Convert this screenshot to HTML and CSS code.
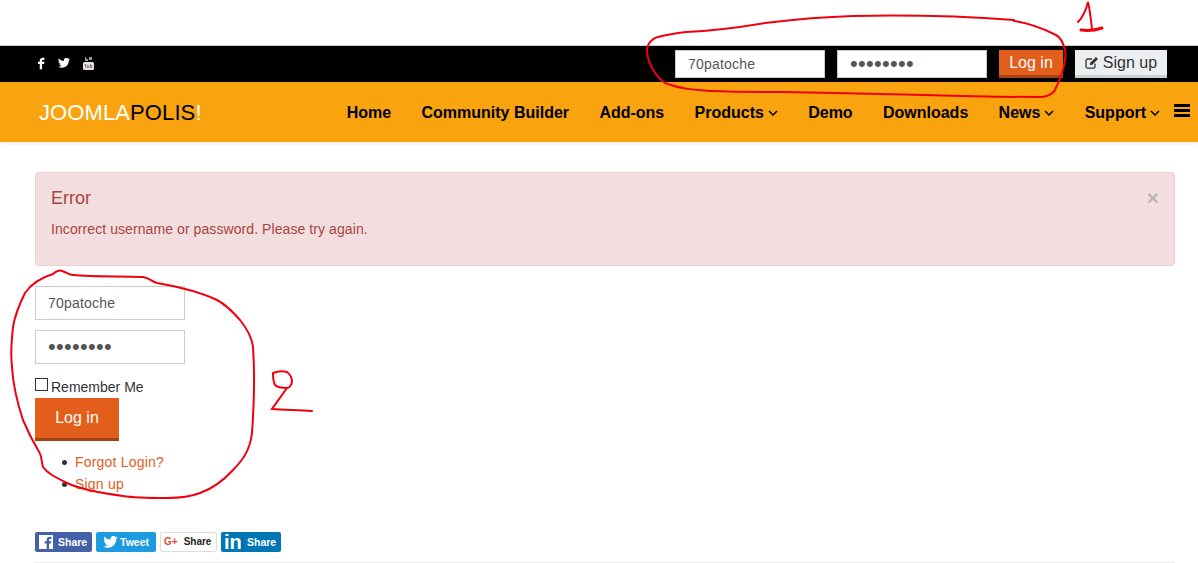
FILE: index.html
```html
<!DOCTYPE html>
<html lang="en">
<head>
    <meta charset="UTF-8">
    <title>Joomlapolis - Login</title>
    <link rel="stylesheet" href="styles.css">
</head>
<body>
    <div class="topbar">
        <div class="social">
            <a href="#" class="social-fb"><svg width="7" height="13" viewBox="6 3 12 22"><path fill="#fff" d="M14 8h3V4h-3c-2.8 0-5 2.2-5 5v2H6v4h3v9h4v-9h3.5l.5-4h-4V9c0-.6.4-1 1-1z"/></svg></a>
            <a href="#" class="social-tw"><svg width="12" height="10" viewBox="0 0 24 20" ><path fill="#fff" transform="translate(0 -2.2)" d="M23.953 4.57a10 10 0 01-2.825.775 4.958 4.958 0 002.163-2.723c-.951.555-2.005.959-3.127 1.184a4.92 4.92 0 00-8.384 4.482C7.69 8.095 4.067 6.13 1.64 3.162a4.822 4.822 0 00-.666 2.475c0 1.71.87 3.213 2.188 4.096a4.904 4.904 0 01-2.228-.616v.06a4.923 4.923 0 003.946 4.827 4.996 4.996 0 01-2.212.085 4.936 4.936 0 004.604 3.417 9.867 9.867 0 01-6.102 2.105c-.39 0-.779-.023-1.17-.067a13.995 13.995 0 007.557 2.209c9.053 0 13.998-7.496 13.998-13.985 0-.21 0-.42-.015-.63A9.935 9.935 0 0024 4.59z"/></svg></a>
            <a href="#" class="social-yt"><svg width="11" height="13" viewBox="0 0 11 13"><path fill="#9a9a9a" d="M2 0h1.200v2H5v2H2zM6 0h3v3H6z"/><rect y="5" width="11" height="8" rx="1.500" fill="#e4e4e4"/><path fill="#8a6a6a" d="M1.500 7h2v.8H3V11h-.9V7.800h-.6zM4 8h.8v2.400h.7V8h.8v3H4zM7 7h.8v1h1.400v3H7zM7.800 9v1.300h.6V9z"/></svg></a>
        </div>
        <form class="top-login">
            <input type="text" class="field" value="70patoche">
            <input type="password" class="field field-pass" value="aaaaaaaa">
            <button type="button" class="btn btn-login">Log in</button>
            <button type="button" class="btn btn-signup"><svg width="14" height="13" viewBox="0 0 14 13"><path fill="none" stroke="#333" stroke-width="1.3" d="M10 7.500V10.500a1.600 1.600 0 0 1-1.600 1.600H2.600A1.600 1.600 0 0 1 1 10.500V4.600A1.600 1.600 0 0 1 2.600 3H7"/><path fill="#333" d="M5 7l6-6 2 2-6 6H5z"/></svg>Sign up</button>
        </form>
    </div>

    <header class="navbar">
        <a href="#" class="brand"><span class="brand-light">JOOMLA</span>POLIS<span class="brand-light">!</span></a>
        <nav class="menu">
            <a href="#">Home</a>
            <a href="#">Community Builder</a>
            <a href="#">Add-ons</a>
            <a href="#">Products<svg class="caret" width="10" height="6" viewBox="0 0 10 6"><path d="M1 1l4 4 4-4"/></svg></a>
            <a href="#">Demo</a>
            <a href="#">Downloads</a>
            <a href="#">News<svg class="caret" width="10" height="6" viewBox="0 0 10 6"><path d="M1 1l4 4 4-4"/></svg></a>
            <a href="#">Support<svg class="caret" width="10" height="6" viewBox="0 0 10 6"><path d="M1 1l4 4 4-4"/></svg></a>
        </nav>
        <div class="burger"><span></span><span></span><span></span></div>
    </header>

    <main class="content">
        <div class="alert">
            <span class="alert-close">×</span>
            <h4>Error</h4>
            <p>Incorrect username or password. Please try again.</p>
        </div>

        <form class="login-form">
            <input type="text" class="field" value="70patoche">
            <input type="password" class="field field-pass" value="aaaaaaaa">
            <label class="remember"><span class="checkbox"></span>Remember Me</label>
            <button type="button" class="btn-big">Log in</button>
            <ul class="links">
                <li><a href="#">Forgot Login?</a></li>
                <li><a href="#">Sign up</a></li>
            </ul>
        </form>

        <div class="share">
            <a href="#" class="share-btn share-fb"><svg width="15" height="14" viewBox="0 0 15 14"><path fill="#fff" d="M0 0h14v14h-4V8.500h2l.3-2.300H10V5c0-.7.2-1.100 1.100-1.100h1.300V1.900C12 1.800 11.400 1.800 10.800 1.800 9 1.800 7.700 2.900 7.700 4.800v1.400H5.700v2.300h2V14H0z"/></svg>Share</a>
            <a href="#" class="share-btn share-tw"><svg width="15" height="12" viewBox="0 0 24 20"><path fill="#fff" transform="translate(0 -2.200)" d="M23.953 4.570a10 10 0 01-2.825.775 4.958 4.958 0 002.163-2.723c-.951.555-2.005.959-3.127 1.184a4.920 4.920 0 00-8.384 4.482C7.690 8.095 4.067 6.130 1.640 3.162a4.822 4.822 0 00-.666 2.475c0 1.710.870 3.213 2.188 4.096a4.904 4.904 0 01-2.228-.616v.060a4.923 4.923 0 003.946 4.827 4.996 4.996 0 01-2.212.085 4.936 4.936 0 004.604 3.417 9.867 9.867 0 01-6.102 2.105c-.390 0-.779-.023-1.170-.067a13.995 13.995 0 007.557 2.209c9.053 0 13.998-7.496 13.998-13.985 0-.210 0-.420-.015-.630A9.935 9.935 0 0024 4.590z"/></svg>Tweet</a>
            <a href="#" class="share-btn share-gp"><span class="gp-mark">G+</span>Share</a>
            <a href="#" class="share-btn share-li"><span class="li-mark">in</span>Share</a>
        </div>
        <hr class="rule">
    </main>

    <svg class="scribble" width="1198" height="563" viewBox="0 0 1198 563">
        <path d="M1014 20C960 16 900 15 853 16 820 17 790 20 765 23 735 28 710 31 686 32 670 34 662 36 658 37 650 39 646 47 647 52 648 63 655 76 665 83 680 89 695 90 711 91 735 92 760 92 782 92 830 93 880 94 925 95 960 96 1010 97 1042 97 1050 96 1054 92 1055 90 1062 75 1067 60 1065 50 1063 42 1060 37 1056 35 1040 27 1028 23 1014 21"/>
        <path d="M1078 22C1083 17 1086 10 1088 2 1090 10 1091 20 1092 29"/>
        <path class="scribble-base" d="M1081 30C1088 31 1096 30 1102 28"/>
        <path d="M53 274C56 271 60 270 62 271 66 272 69 275 73 275 95 277 120 276 143 277 150 278 152 282 157 283 180 287 200 292 217 300 228 306 234 313 240 320 248 330 252 338 253 347 255 375 254 405 252 433 250 450 243 460 233 470 222 482 212 489 200 493 190 497 180 498 167 498 150 498 135 498 123 496 100 493 82 490 67 483 55 477 47 473 43 467 41 460 42 455 38 450 32 440 28 432 23 420 18 405 13 385 12 367 10 350 12 338 13 327 15 315 20 303 25 293 32 283 43 277 53 274"/>
        <path d="M273 373C278 371 284 371 287 372 291 375 292 379 292 382 291 386 289 388 287 388 282 388 277 387 275 385 273 381 273 376 273 373M287 388C282 395 277 402 272 409 285 410 298 410 312 411"/>
    </svg>
</body>
</html>
```

FILE: styles.css
```css
* {
    box-sizing: border-box;
}

html {
    overflow: hidden;
}

body {
    margin: 0;
    padding-top: 45px;
    height: 563px;
    overflow: hidden;
    position: relative;
    background-color: #fff;
    color: #333;
    font-family: "Liberation Sans", Arial, sans-serif;
    font-size: 14px;
    line-height: 20px;
}

a {
    text-decoration: none;
}

/* top bar */
.topbar {
    height: 37px;
    background-color: #000;
    border-top: 1px solid #ccc;
    display: flex;
    justify-content: space-between;
    padding: 4px 31px 4px 38px;
}

.social {
    display: flex;
    align-items: center;
    margin-top: -2px;
}

.social a {
    display: flex;
}

.social-tw {
    margin-left: 13px;
}

.social-yt {
    margin-left: 13px;
}

.top-login {
    display: flex;
}

.field {
    width: 150px;
    padding: 0 12px;
    border: 1px solid #ccc;
    background-color: #fff;
    color: #555;
    font-family: inherit;
    font-size: 14px;
    letter-spacing: 0.2px;
}

.field-pass {
    font-size: 22px;
    letter-spacing: 0.3px;
}

.top-login .field {
    height: 28px;
    margin-right: 12px;
}

.btn {
    height: 28px;
    border: none;
    font-family: inherit;
    font-size: 16px;
    padding: 0;
}

.btn-login {
    width: 64px;
    background-color: #e35d1b;
    border-bottom: 3px solid #a24317;
    color: #fff;
}

.btn-signup {
    width: 92px;
    margin-left: 12px;
    background-color: #eceff1;
    border-bottom: 3px solid #c9d0d4;
    color: #333;
}

.btn-signup svg {
    margin-right: 4px;
    vertical-align: -1px;
}

/* orange nav */
.navbar {
    height: 60px;
    background-color: #f9a40e;
    box-shadow: 0 1px 4px rgba(0, 0, 0, 0.12);
    display: flex;
    align-items: center;
    padding: 2px 8px 0 39px;
}

.brand {
    color: #000;
    font-size: 22px;
    letter-spacing: 0.1px;
}

.brand-light {
    color: #fff;
}

.menu {
    margin-left: auto;
    display: flex;
    gap: 30.3px;
    font-size: 16px;
    font-weight: bold;
}

.menu a {
    color: #000;
}

.caret {
    margin-left: 4px;
    vertical-align: 2px;
    fill: none;
    stroke: #000;
    stroke-width: 1.5;
}

.burger {
    width: 16px;
    margin-left: 14px;
    margin-top: -5px;
    display: flex;
    flex-direction: column;
    gap: 2px;
}

.burger span {
    height: 3px;
    background-color: #000;
}

/* main content */
.content {
    padding: 30px 23px 0 35px;
}

.alert {
    height: 94px;
    padding: 15px;
    position: relative;
    background-color: #f2dede;
    border: 1px solid #ebccd1;
    border-radius: 4px;
    color: #a94442;
}

.alert h4 {
    margin: 0 0 11px;
    font-size: 18px;
    font-weight: normal;
    line-height: 20px;
}

.alert p {
    margin: 0;
    letter-spacing: 0.08px;
}

.alert-close {
    position: absolute;
    top: 15px;
    right: 15px;
    color: #bcb6b6;
    font-size: 21px;
    font-weight: bold;
}

.login-form {
    margin-top: 20px;
    display: flex;
    flex-direction: column;
    align-items: flex-start;
}

.login-form .field {
    height: 34px;
    margin-bottom: 10px;
}

.login-form .field + .field {
    margin-bottom: 0;
}

.remember {
    margin-top: 13px;
    display: flex;
    height: 21px;
}

.checkbox {
    width: 13px;
    height: 13px;
    margin: 1px 3px 0 0;
    border: 1px solid #333;
    background-color: #fff;
}

.btn-big {
    width: 84px;
    height: 43px;
    margin-top: 0;
    padding: 0;
    border: none;
    border-bottom: 3px solid #a24317;
    background-color: #e35d1b;
    color: #fff;
    font-family: inherit;
    font-size: 16px;
}

.links {
    margin: 10px 0 0;
    padding-left: 40px;
    line-height: 22px;
    list-style: none;
}

.links li {
    display: flex;
    align-items: center;
}

.links li::before {
    content: "";
    width: 5px;
    height: 5px;
    margin: 1px 8px 0 -13px;
    border-radius: 50%;
    background-color: #333;
}

.links a {
    color: #e35d1b;
    letter-spacing: 0.2px;
}

/* share buttons */
.share {
    margin-top: 37px;
    display: flex;
    gap: 4px;
}

.share-btn {
    height: 20px;
    border-radius: 2px;
    display: flex;
    align-items: center;
    color: #fff;
    font-size: 10.5px;
    font-weight: bold;
}

.share-fb {
    width: 57px;
    padding-left: 4px;
    gap: 4px;
    background-color: #4460a8;
}

.share-tw {
    width: 60px;
    padding-left: 7px;
    gap: 2px;
    background-color: #1c9be0;
}

.share-gp {
    width: 57px;
    padding-left: 3px;
    gap: 6px;
    background-color: #fff;
    border: 1px solid #ddd;
    color: #222;
    font-size: 10px;
}

.gp-mark {
    color: #d9493c;
    font-size: 10px;
}

.share-li {
    width: 60px;
    padding-left: 3px;
    background-color: #0077b5;
}

.li-mark {
    width: 19px;
    margin-right: 4px;
    border-right: 1px solid #00659b;
    font-size: 20px;
    line-height: 20px;
}

.rule {
    margin: 10px 0 0;
    border: none;
    border-top: 1px solid #eee;
}

/* red marker notes drawn over the page */
.scribble {
    position: absolute;
    top: 0;
    left: 0;
    pointer-events: none;
    fill: none;
    stroke: #f0000f;
    stroke-width: 2;
    stroke-linecap: round;
}

.scribble-base {
    stroke-width: 3;
}
```
